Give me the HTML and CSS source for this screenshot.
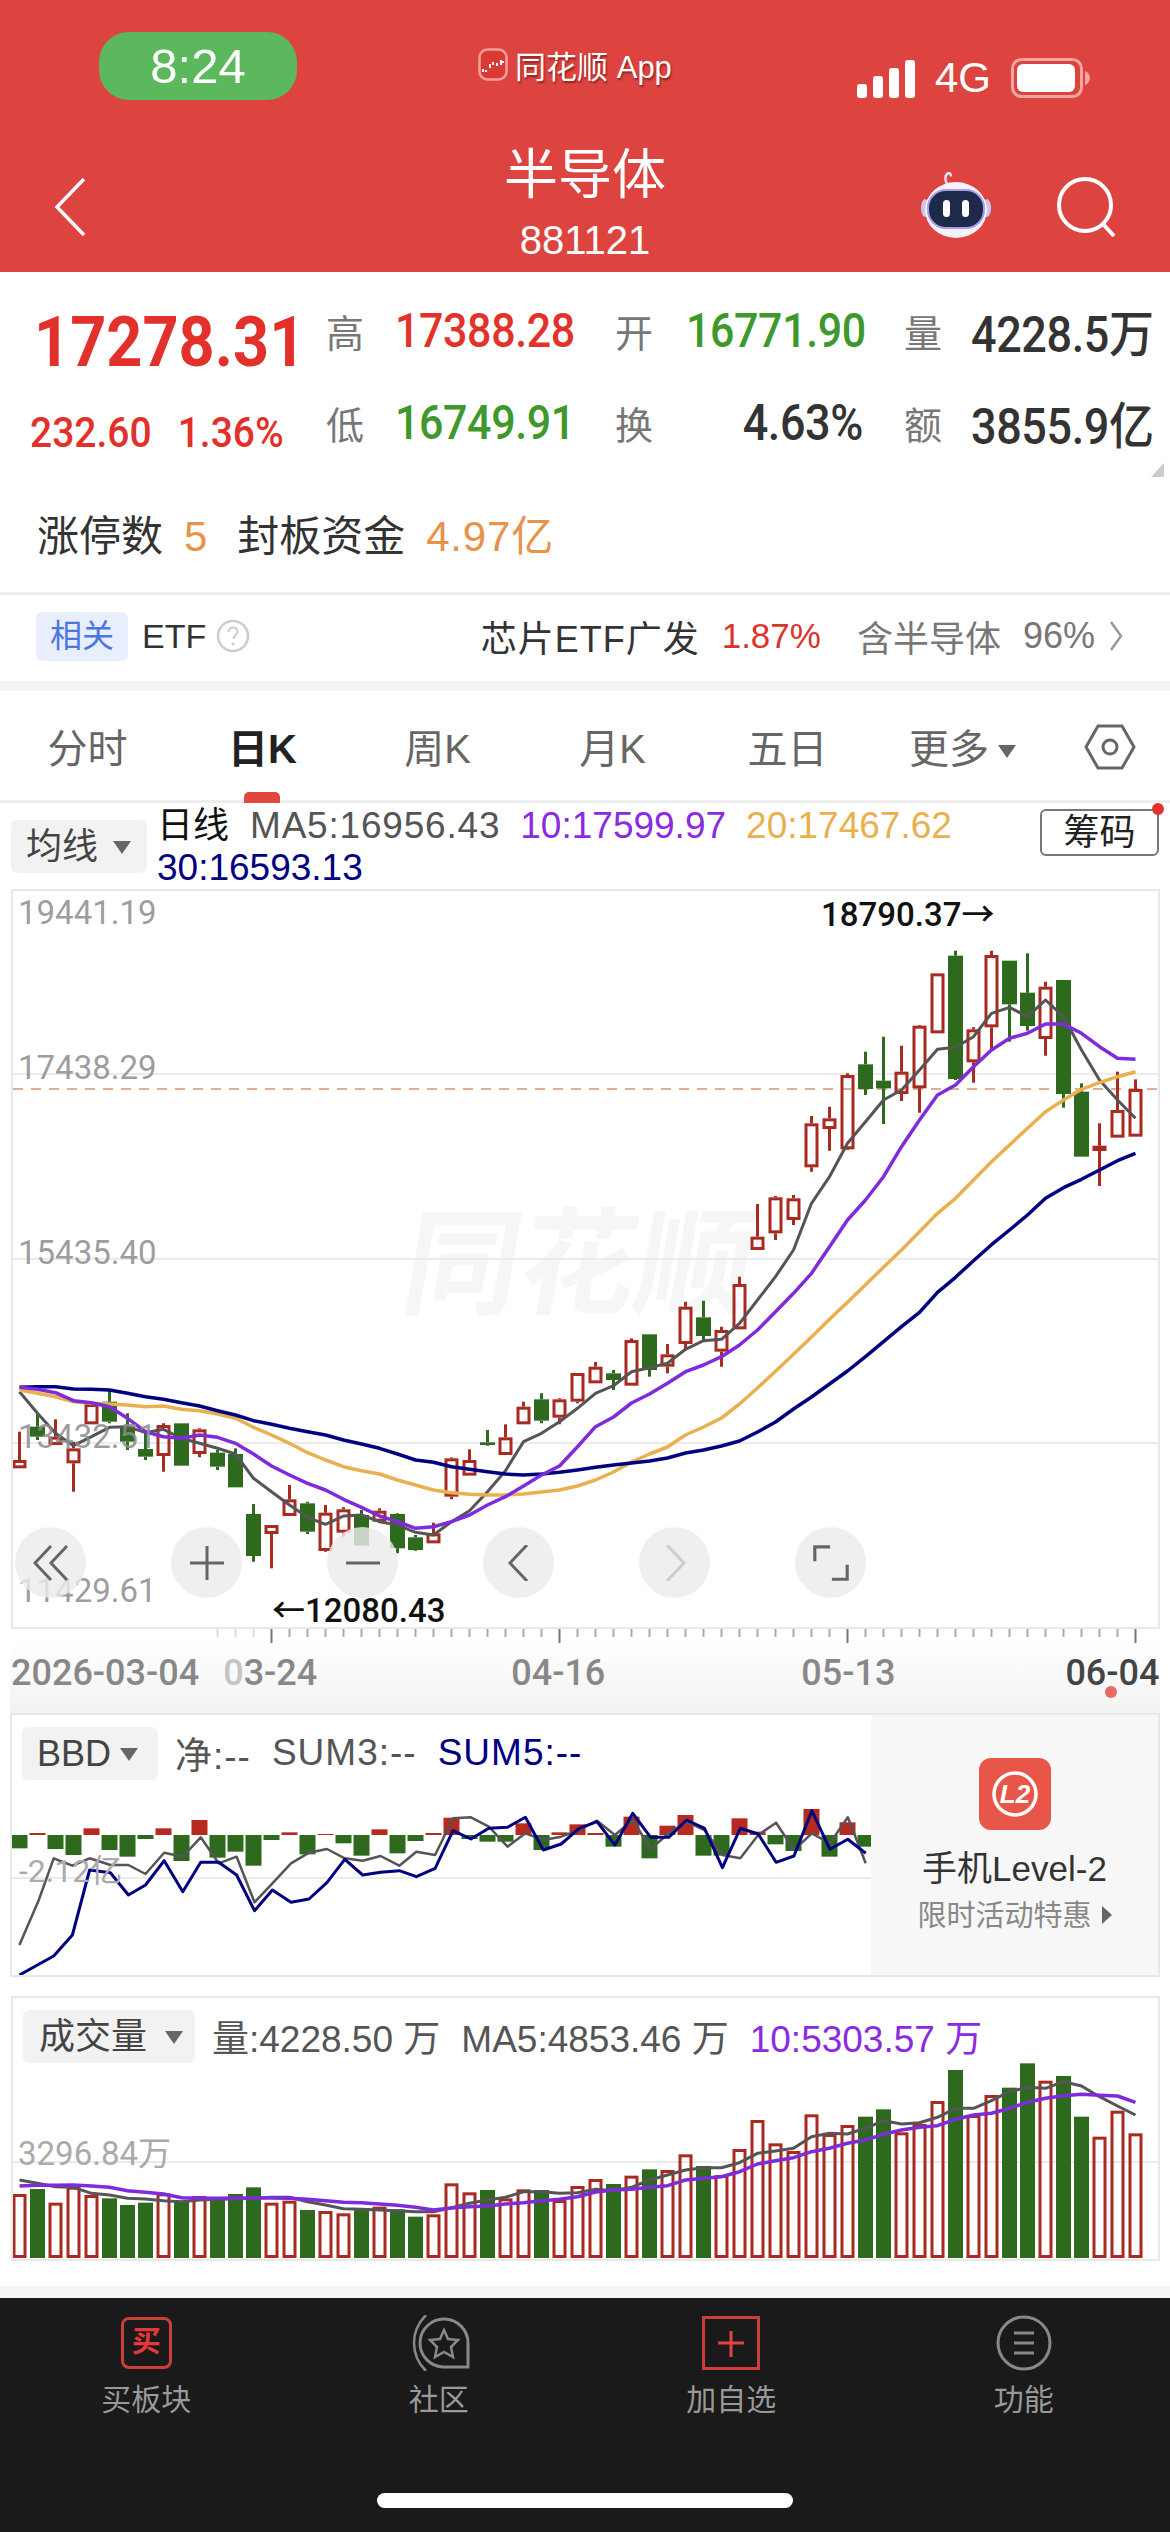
FILE: index.html
```html
<!DOCTYPE html>
<html lang="zh-CN">
<head>
    <meta charset="UTF-8">
    <meta name="viewport" content="width=device-width, initial-scale=1.0">
    <title>半导体 881121</title>
    <link rel="stylesheet" href="styles.css">
</head>
<body>

<div class="page">
    <header class="top">
        <div class="status">
            <div class="time-pill">8:24</div>
            <div class="status-app">
                <svg class="app-logo" viewBox="0 0 30 33">
                    <rect x="1.5" y="1.5" width="27" height="30" rx="8" fill="#d93a36" stroke="#f3a09c" stroke-width="2.5"/>
                    <path d="M5 21v3M8 22v2M12 16v4M15 14v3M19 15v3M23 12v5M25 13v2" stroke="#fff" stroke-width="2"/>
                </svg>
                <span>同花顺 App</span>
            </div>
            <div class="status-right">
                <svg class="signal" viewBox="0 0 58 38">
                    <rect x="0" y="24" width="10" height="14" rx="3" fill="#fff"/>
                    <rect x="16" y="16" width="10" height="22" rx="3" fill="#fff"/>
                    <rect x="32" y="8" width="10" height="30" rx="3" fill="#fff"/>
                    <rect x="48" y="0" width="10" height="38" rx="3" fill="#fff"/>
                </svg>
                <span class="net">4G</span>
                <svg class="battery" viewBox="0 0 79 40">
                    <rect x="1.5" y="1.5" width="69" height="37" rx="9" fill="none" stroke="#f3a5a2" stroke-width="3"/>
                    <rect x="6" y="6" width="58" height="28" rx="6" fill="#fff"/>
                    <path d="M74 13c3 1 5 4 5 7s-2 6-5 7z" fill="#f3a5a2"/>
                </svg>
            </div>
        </div>
        <div class="titlebar">
            <div class="title-left">
                <svg class="back" viewBox="0 0 32 60"><path d="M30 2 3 30l27 28" fill="none" stroke="#fff" stroke-width="3.5"/></svg>
            </div>
            <div class="title-center">
                <div class="title-name">半导体</div>
                <div class="title-code">881121</div>
            </div>
            <div class="title-right">
                <svg class="robot" viewBox="0 0 72 66">
                    <path d="M27 12C25 8 24 5 27 2c2-2 5 0 3 2" fill="none" stroke="#e6e2f7" stroke-width="2.5"/>
                    <ellipse cx="5" cy="36" rx="4" ry="9" fill="#c9c6f0"/>
                    <ellipse cx="67" cy="36" rx="4" ry="9" fill="#c9c6f0"/>
                    <ellipse cx="36" cy="38" rx="31" ry="28" fill="#f4f2fc"/>
                    <rect x="8" y="18" width="56" height="38" rx="18" fill="#1f2a4b" stroke="#a99be8" stroke-width="2"/>
                    <rect x="23" y="28" width="7" height="17" rx="3.5" fill="#fff"/>
                    <rect x="42" y="28" width="7" height="17" rx="3.5" fill="#fff"/>
                </svg>
                <svg class="search" viewBox="0 0 60 60">
                    <circle cx="29" cy="28" r="26" fill="none" stroke="#fff" stroke-width="4"/>
                    <path d="m47 47 11 12" stroke="#fff" stroke-width="4"/>
                </svg>
            </div>
        </div>
    </header>

    <section class="quote">
        <div class="quote-main">
            <div class="price-box">
                <div class="price">17278.31</div>
                <div class="change"><span>232.60</span><span>1.36%</span></div>
            </div>
            <div class="quote-grid">
                <span class="q-label">高</span><span class="q-val red">17388.28</span>
                <span class="q-label">开</span><span class="q-val green">16771.90</span>
                <span class="q-label">量</span><span class="q-val dark">4228.5万</span>
                <span class="q-label">低</span><span class="q-val green">16749.91</span>
                <span class="q-label">换</span><span class="q-val dark right">4.63%</span>
                <span class="q-label">额</span><span class="q-val dark">3855.9亿</span>
            </div>
        </div>
        <div class="corner"></div>
        <div class="limit">
            <span>涨停数</span><span class="orange">5</span>
            <span class="limit-next">封板资金</span><span class="orange">4.97亿</span>
        </div>
    </section>

    <section class="etf">
        <span class="etf-tag">相关</span>
        <span class="etf-name">ETF</span>
        <svg class="help" viewBox="0 0 34 34">
            <circle cx="17" cy="17" r="15" fill="none" stroke="#ccc" stroke-width="2.5"/>
            <path d="M12.500 13c0-6 9-6 9 0 0 3-4 3-4 7" fill="none" stroke="#ccc" stroke-width="2"/>
            <circle cx="17" cy="25" r="1.500" fill="#ccc"/>
        </svg>
        <div class="etf-right">
            <span class="etf-fund">芯片ETF广发</span>
            <span class="etf-pct">1.87%</span>
            <span class="etf-gray etf-hold">含半导体</span>
            <span class="etf-gray">96%</span>
            <svg class="etf-arrow" viewBox="0 0 14 32"><path d="m2 2 10 14L2 30" fill="none" stroke="#999" stroke-width="2.500"/></svg>
        </div>
    </section>

    <nav class="tabs">
        <span class="tab">分时</span>
        <span class="tab active">日K</span>
        <span class="tab">周K</span>
        <span class="tab">月K</span>
        <span class="tab">五日</span>
        <span class="tab">更多<i class="arrow-down"></i></span>
        <svg class="hex" viewBox="0 0 52 46">
            <path d="M14 2h24l12 21-12 21H14L2 23z" fill="none" stroke="#666" stroke-width="3"/>
            <circle cx="26" cy="23" r="7" fill="none" stroke="#666" stroke-width="3"/>
        </svg>
    </nav>

    <div class="chart-head">
        <div class="chip chip-ma">均线<i class="arrow-down"></i></div>
        <div class="legend">
            <span class="legend-type">日线</span>
            <span class="c-gray legend-ma5">MA5:16956.43</span>
            <span class="c-purple">10:17599.97</span>
            <span class="c-orange">20:17467.62</span>
            <span class="c-navy">30:16593.13</span>
        </div>
        <div class="chips-btn">筹码</div>
    </div>

    <div class="pane pane-kline">
        <div class="watermark">同花顺</div>
        <svg id="kline" class="chart" viewBox="13 891 1145 736"></svg>
        <span class="y-label y1">19441.19</span>
        <span class="y-label y2">17438.29</span>
        <span class="y-label y3">15435.40</span>
        <span class="y-label y4">13432.51</span>
        <span class="y-label y5">11429.61</span>
        <span class="mark mark-high">18790.37→</span>
        <span class="mark mark-low">←12080.43</span>
        <div class="chart-btns">
            <div class="round-btn">
                <svg viewBox="0 0 36 36"><path d="M18 1 2 18l16 17M34 1 18 18l16 17" fill="none" stroke="#666" stroke-width="3"/></svg>
            </div>
            <div class="round-btn">
                <svg viewBox="0 0 36 36"><path d="M1 18h34M18 1v34" fill="none" stroke="#666" stroke-width="3"/></svg>
            </div>
            <div class="round-btn">
                <svg viewBox="0 0 36 36"><path d="M1 18h34" fill="none" stroke="#666" stroke-width="3"/></svg>
            </div>
            <div class="round-btn">
                <svg viewBox="0 0 36 36"><path d="M26 0 9 18l17 18" fill="none" stroke="#666" stroke-width="3"/></svg>
            </div>
            <div class="round-btn">
                <svg viewBox="0 0 36 36"><path d="m10 0 17 18-17 18" fill="none" stroke="#ccc" stroke-width="3"/></svg>
            </div>
            <div class="round-btn">
                <svg viewBox="0 0 40 40"><path d="M2 18V2h17M38 22v16H21" fill="none" stroke="#666" stroke-width="3.500"/></svg>
            </div>
        </div>
    </div>

    <div class="axis">
        <svg id="ticks" class="ticks" viewBox="10 0 1150 16"></svg>
        <div class="dates">
            <span>2026-03-04</span>
            <span><i class="fade">0</i>3-24</span>
            <span>04-16</span>
            <span>05-13</span>
            <span class="date-last">06-04</span>
        </div>
        <i class="axis-dot"></i>
    </div>

    <div class="pane pane-bbd">
        <svg id="bbd" class="chart" viewBox="12 1715 1146 260"></svg>
        <div class="pane-head">
            <div class="chip">BBD<i class="arrow-down"></i></div>
            <span class="c-gray">净:--</span>
            <span class="c-gray">SUM3:--</span>
            <span class="c-navy">SUM5:--</span>
        </div>
        <span class="y-label y-bbd">-2.12亿</span>
        <div class="promo">
            <svg class="promo-icon" viewBox="0 0 72 72">
                <rect width="72" height="72" rx="12" fill="#e8564a"/>
                <circle cx="36" cy="36" r="21" fill="none" stroke="#fff" stroke-width="3.500"/>
                <text x="36" y="45" class="promo-l2">L2</text>
            </svg>
            <div class="promo-title">手机Level-2</div>
            <div class="promo-sub">限时活动特惠<i class="arrow-right"></i></div>
        </div>
    </div>

    <div class="pane pane-vol">
        <svg id="vol" class="chart" viewBox="13 1998 1145 261"></svg>
        <div class="pane-head">
            <div class="chip chip-vol">成交量<i class="arrow-down"></i></div>
            <span class="c-gray">量:4228.50 万</span>
            <span class="c-gray">MA5:4853.46 万</span>
            <span class="c-purple">10:5303.57 万</span>
        </div>
        <span class="y-label y-vol">3296.84万</span>
    </div>

    <div class="spacer"></div>
    <div class="band"></div>

    <footer class="bottom">
        <div class="bottom-items">
            <div class="bottom-item">
                <div class="icon-box icon-buy">买</div>
                <span>买板块</span>
            </div>
            <div class="bottom-item">
                <svg class="icon-box" viewBox="0 0 62 56">
                    <path d="M18 0C2 16 2 40 18 56" fill="none" stroke="#888" stroke-width="2.500"/>
                    <path d="M60 52H35A24 24 0 1 1 60 28z" fill="none" stroke="#888" stroke-width="3"/>
                    <path d="m36 15 4 9 10 1-7 7 2 10-9-5-9 5 2-10-7-7 10-1z" fill="none" stroke="#888" stroke-width="2.500"/>
                </svg>
                <span>社区</span>
            </div>
            <div class="bottom-item">
                <svg class="icon-box" viewBox="0 0 58 56">
                    <rect x="1.500" y="2.500" width="55" height="51" fill="none" stroke="#c9403a" stroke-width="3"/>
                    <path d="M29 16v26M16 28h26" fill="none" stroke="#e04540" stroke-width="3"/>
                </svg>
                <span>加自选</span>
            </div>
            <div class="bottom-item">
                <svg class="icon-box" viewBox="0 0 56 56">
                    <circle cx="28" cy="28" r="26" fill="none" stroke="#888" stroke-width="3"/>
                    <path d="M18 18h20M18 28h20M18 38h20" fill="none" stroke="#888" stroke-width="3"/>
                </svg>
                <span>功能</span>
            </div>
        </div>
        <div class="home-bar"></div>
    </footer>
</div>

<script src="script.js"></script>
</body>
</html>
```

FILE: styles.css
```css
* {
    box-sizing: border-box;
}
body {
    margin: 0;
    background-color: #fff;
    font-family: "Liberation Sans", "Noto Sans CJK SC", sans-serif;
    color: #333;
}
i {
    font-style: normal;
}
.page {
    width: 1170px;
    height: 2532px;
    overflow: hidden;
    display: flex;
    flex-direction: column;
}

/* red header */
.top {
    flex: none;
    height: 272px;
    background-color: #dd4440;
    color: #fff;
}
.status {
    display: flex;
    justify-content: space-between;
    padding: 32px 80px 0 99px;
    height: 100px;
}
.time-pill {
    width: 198px;
    height: 68px;
    border-radius: 30px;
    background-color: #5cb85c;
    font-size: 49px;
    line-height: 68px;
    text-align: center;
}
.status-app {
    display: flex;
    align-items: center;
    gap: 7px;
    height: 64px;
    margin-right: 4px;
    font-size: 31px;
    text-shadow: 1px 2px 2px rgba(80, 0, 0, 0.55);
}
.app-logo {
    width: 30px;
    height: 33px;
}
.status-right {
    display: flex;
    align-items: flex-end;
    gap: 20px;
    height: 66px;
}
.signal {
    width: 58px;
    height: 38px;
}
.net {
    font-size: 42px;
    line-height: 40px;
}
.battery {
    width: 79px;
    height: 40px;
}
.titlebar {
    display: grid;
    grid-template-columns: 1fr auto 1fr;
    height: 172px;
}
.title-left {
    padding: 77px 0 0 54px;
}
.back {
    display: block;
    width: 32px;
    height: 60px;
}
.title-center {
    padding-top: 45px;
    text-align: center;
}
.title-name {
    font-size: 54px;
    line-height: 60px;
}
.title-code {
    margin-top: 13px;
    font-size: 40px;
    line-height: 44px;
}
.title-right {
    display: flex;
    justify-content: flex-end;
    align-items: flex-start;
    gap: 64px;
    padding: 72px 54px 0 0;
}
.robot {
    width: 72px;
    height: 66px;
}
.search {
    width: 60px;
    height: 60px;
    margin-top: 5px;
}

/* quote block */
.quote {
    position: relative;
    flex: none;
    height: 323px;
    border-bottom: 3px solid #eee;
}
.quote-main {
    display: flex;
    padding-top: 12px;
}
.price-box {
    width: 326px;
    font-family: Roboto, "Noto Sans CJK SC", sans-serif;
    color: #e2302a;
}
.price {
    margin: 23px 0 0 34px;
    font-size: 63px;
    font-weight: 700;
    line-height: 70px;
    transform: scaleY(1.12);
}
.change {
    display: flex;
    gap: 26px;
    margin: 34px 0 0 30px;
    font-size: 39px;
    font-weight: 500;
    line-height: 44px;
    transform: scaleY(1.1);
}
.quote-grid {
    display: grid;
    grid-template-columns: 69px 220px 71px 218px 67px auto;
    grid-auto-rows: 92px;
    align-items: center;
    font-family: Roboto, "Noto Sans CJK SC", sans-serif;
}
.q-label {
    font-size: 38px;
    color: #777;
}
.q-val {
    font-size: 43px;
    font-weight: 500;
    letter-spacing: -0.4px;
    color: #333;
    transform: scaleY(1.1);
}
.q-val.dark {
    font-size: 45px;
}
.q-val.right {
    padding-right: 41px;
    text-align: right;
}
.q-val.red {
    color: #e2332b;
}
.q-val.green {
    color: #3f982c;
}
.corner {
    position: absolute;
    right: 6px;
    top: 191px;
    width: 0;
    height: 0;
    border-left: 13px solid transparent;
    border-bottom: 14px solid #ccc;
}
.limit {
    display: flex;
    gap: 21px;
    margin-top: 38px;
    padding-left: 37px;
    font-size: 42px;
    line-height: 62px;
}
.limit-next {
    margin-left: 8px;
}
.orange {
    color: #e8924a;
    letter-spacing: 0.8px;
}

/* related etf */
.etf {
    flex: none;
    display: flex;
    align-items: center;
    height: 86px;
    padding: 0 47px 4px 36px;
    font-size: 36px;
}
.etf-tag {
    width: 92px;
    height: 49px;
    border-radius: 6px;
    background-color: #e8eefb;
    color: #4a76e0;
    font-size: 32px;
    line-height: 49px;
    text-align: center;
}
.etf-name {
    margin-left: 14px;
    font-size: 34px;
}
.help {
    width: 34px;
    height: 34px;
    margin-left: 10px;
}
.etf-right {
    display: flex;
    align-items: center;
    margin-left: auto;
    gap: 22px;
}
.etf-fund {
    letter-spacing: 1px;
}
.etf-pct {
    font-size: 35px;
    color: #d9342c;
}
.etf-gray {
    color: #777;
}
.etf-hold {
    margin-left: 14px;
}
.etf-arrow {
    width: 14px;
    height: 32px;
    margin-left: -8px;
}

/* period tabs */
.tabs {
    display: flex;
    flex: none;
    height: 112px;
    margin-top: 10px;
    border-bottom: 3px solid #eee;
    box-shadow: 0 -10px 0 #f4f4f4;
    padding-right: 34px;
}
.tab {
    position: relative;
    width: 175px;
    padding-top: 36px;
    text-align: center;
    font-size: 40px;
    line-height: 44px;
    color: #666;
}
.tab.active {
    color: #222;
    font-weight: 700;
}
.tab.active::after {
    content: "";
    position: absolute;
    left: 69px;
    bottom: -3px;
    width: 36px;
    height: 11px;
    border-radius: 5px 5px 0 0;
    background-color: #e2473c;
}
.arrow-down {
    display: inline-block;
    width: 0;
    height: 0;
    margin-left: 9px;
    vertical-align: 5px;
    border-left: 9px solid transparent;
    border-right: 9px solid transparent;
    border-top: 13px solid #666;
}
.hex {
    width: 52px;
    height: 46px;
    margin: 33px 0 0 34px;
}

/* chart header */
.chart-head {
    position: relative;
    flex: none;
    display: flex;
    height: 86px;
    padding-left: 11px;
    font-size: 37px;
}
.chip {
    flex: none;
    height: 53px;
    padding: 0 14px 0 15px;
    border-radius: 6px;
    background-color: #f2f2f2;
    font-size: 36px;
    line-height: 53px;
    color: #444;
}
.chip-ma {
    width: 136px;
    margin-top: 17px;
}
.chip-ma .arrow-down {
    margin-left: 15px;
}
.legend {
    display: flex;
    flex-wrap: wrap;
    gap: 0 20px;
    width: 830px;
    margin: 2px 0 0 10px;
    line-height: 42px;
    white-space: nowrap;
}
.legend-type {
    margin-right: 1px;
    font-size: 36px;
    color: #111;
}
.legend-ma5 {
    letter-spacing: 0.8px;
}
.c-gray {
    color: #555;
}
.c-purple {
    color: #8a2be2;
}
.c-orange {
    color: #e8b04e;
}
.c-navy {
    color: #000080;
}
.chips-btn {
    position: absolute;
    left: 1040px;
    top: 6px;
    width: 119px;
    height: 47px;
    border: 2px solid #777;
    border-radius: 6px;
    font-size: 36px;
    line-height: 43px;
    text-align: center;
    color: #222;
}
.chips-btn::after {
    content: "";
    position: absolute;
    right: -7px;
    top: -8px;
    width: 12px;
    height: 12px;
    border-radius: 50%;
    background-color: #e2332b;
}

/* chart panes */
.pane {
    position: relative;
    flex: none;
    width: 1149px;
    margin-left: 11px;
    border: 2px solid #e8e8e8;
    background-color: #fff;
}
.pane-kline {
    height: 740px;
}
.pane-bbd {
    height: 264px;
    width: 1150px;
    margin-left: 10px;
}
.pane-vol {
    height: 265px;
    margin-top: 19px;
}
.chart {
    position: relative;
    display: block;
    width: 100%;
    height: 100%;
}
.watermark {
    position: absolute;
    left: 392px;
    top: 314px;
    font-size: 116px;
    font-weight: 700;
    line-height: 120px;
    color: #f6f6f6;
    transform: skewX(-10deg);
}
.y-label {
    position: absolute;
    left: 5px;
    font-family: Roboto, "Noto Sans CJK SC", sans-serif;
    font-size: 33px;
    line-height: 34px;
    color: rgba(140, 140, 140, 0.85);
}
.y1 {
    top: 5px;
}
.y2 {
    top: 160px;
}
.y3 {
    top: 345px;
}
.y4 {
    top: 529px;
}
.y5 {
    top: 683px;
}
.y-bbd {
    top: 139px;
    left: 7px;
    font-size: 32px;
    color: #aaa;
}
.y-vol {
    top: 139px;
    left: 5px;
    color: #aaa;
}
.mark {
    position: absolute;
    font-family: Roboto, "Noto Sans CJK SC", sans-serif;
    font-size: 33px;
    font-weight: 500;
    line-height: 34px;
    color: #111;
}
.mark-high {
    left: 808px;
    top: 7px;
}
.mark-low {
    left: 259px;
    top: 703px;
}
.chart-btns {
    position: absolute;
    left: 2px;
    top: 636px;
    display: flex;
    gap: 85px;
}
.round-btn {
    display: flex;
    align-items: center;
    justify-content: center;
    width: 71px;
    height: 71px;
    border-radius: 50%;
    background-color: rgba(235, 235, 235, 0.82);
}
.round-btn svg {
    width: 36px;
    height: 36px;
}

/* date axis */
.axis {
    position: relative;
    flex: none;
    height: 84px;
    margin: 0 10px;
    background: linear-gradient(#fff 12px, #f3f3f3 80px);
}
.ticks {
    display: block;
    width: 1150px;
    height: 16px;
}
.dates {
    display: flex;
    padding: 11px 0 0 1px;
    font-family: Roboto, "Noto Sans CJK SC", sans-serif;
    font-size: 36px;
    font-weight: 500;
    line-height: 34px;
    color: #888;
}
.dates span:nth-child(2) {
    margin-left: 24px;
}
.dates span:nth-child(3) {
    margin-left: 194px;
}
.dates span:nth-child(4) {
    margin-left: 196px;
}
.dates span:nth-child(5) {
    margin-left: 170px;
}
.fade {
    color: #c4c4c4;
}
.date-last {
    color: #444;
}
.axis-dot {
    position: absolute;
    left: 1095px;
    top: 57px;
    width: 12px;
    height: 12px;
    border-radius: 50%;
    background-color: #e86a64;
}

/* pane titles */
.pane-head {
    position: absolute;
    left: 10px;
    top: 11px;
    display: flex;
    align-items: center;
    gap: 21px;
    font-size: 37px;
    white-space: nowrap;
}
.pane-head span {
    letter-spacing: 1px;
}
.pane-head .chip {
    width: 136px;
    margin-right: -4px;
}
.pane-vol .pane-head span {
    letter-spacing: 0;
}
.pane-vol .chip {
    width: 172px;
    margin-right: -4px;
    padding-left: 16px;
}
.pane-vol .arrow-down {
    margin-left: 18px;
}

/* level-2 promo */
.promo {
    position: absolute;
    right: 0;
    top: 0;
    bottom: 0;
    width: 287px;
    padding-top: 43px;
    text-align: center;
    background-color: #f7f7f7;
}
.promo-icon {
    display: block;
    width: 72px;
    height: 72px;
    margin: 0 auto;
}
.promo-l2 {
    font-size: 26px;
    font-weight: 700;
    font-style: italic;
    text-anchor: middle;
    fill: #fff;
}
.promo-title {
    margin-top: 19px;
    font-size: 35px;
    line-height: 40px;
    color: #333;
}
.promo-sub {
    margin-top: 8px;
    font-size: 29px;
    line-height: 38px;
    color: #888;
}
.arrow-right {
    display: inline-block;
    width: 0;
    height: 0;
    margin-left: 10px;
    vertical-align: 2px;
    border-top: 9px solid transparent;
    border-bottom: 9px solid transparent;
    border-left: 10px solid #666;
}

/* bottom nav */
.spacer {
    flex: none;
    height: 25px;
}
.band {
    flex: none;
    height: 12px;
    background-color: #f4f4f4;
}
.bottom {
    flex: 1;
    display: flex;
    flex-direction: column;
    background-color: #1a1a1a;
}
.bottom-items {
    display: grid;
    grid-template-columns: repeat(4, 1fr);
    padding-top: 17px;
}
.bottom-item {
    display: flex;
    flex-direction: column;
    align-items: center;
    font-size: 30px;
    line-height: 34px;
    color: #999;
}
.bottom-item span {
    margin-top: 12px;
}
.icon-box {
    height: 56px;
}
.icon-buy {
    width: 51px;
    height: 52px;
    margin: 2px 0;
    border: 3px solid #c9403a;
    border-radius: 8px;
    font-size: 29px;
    font-weight: 700;
    line-height: 45px;
    text-align: center;
    color: #e5383b;
}
.home-bar {
    width: 416px;
    height: 15px;
    margin: auto auto 24px;
    border-radius: 8px;
    background-color: #fff;
}
```

FILE: script.js
```js
const RED = '#a82a20';
const GREEN = '#2d6a1e';
const GRAY = '#555';
const PURPLE = '#7f2bdc';
const ORANGE = '#e8b04e';
const NAVY = '#000080';

const barX = i => 19.5 + 18 * i;

// candles: high, body top, body bottom, low, colour. values are thirds of a pixel from a base row
const candlesA = [
    [155,240,265,265,'r'],[100,140,170,180,'g'],[118,170,195,195,'r'],[185,205,250,335,'r'],
    [65,72,133,133,'r'],[33,65,125,130,'g'],[100,140,185,210,'g'],[150,207,230,240,'g'],
    [130,135,228,275,'r'],[130,130,257,257,'g'],[145,148,222,232,'r'],[210,218,260,270,'g'],
    [205,222,322,322,'g'],[372,402,528,545,'g'],[435,435,462,565,'r'],[315,358,408,408,'r'],
    [365,370,455,462,'g'],[375,398,513,515,'r'],[382,388,458,470,'r'],[390,405,497,497,'g'],
    [385,392,425,425,'r'],[400,402,505,520,'g'],[465,472,510,512,'g'],[428,460,490,490,'r'],
    [232,235,350,358,'r'],[208,240,287,287,'r'],[150,187,195,197,'g'],[133,172,225,225,'r'],
    [65,80,133,133,'r'],[40,58,122,130,'g'],[55,58,113,133,'r'],[-20,-21,65,70,'r'],[-54,-40,10,10,'r']
];
const candlesB = [
    [1440,1450,1470,1500,'g'],[1345,1350,1487,1487,'r'],[1333,1333,1440,1460,'g'],[1362,1393,1430,1450,'r'],
    [1235,1250,1362,1380,'r'],[1232,1282,1338,1350,'g'],[1310,1320,1385,1430,'r'],[1160,1182,1318,1318,'r'],
    [942,1040,1080,1080,'r'],[918,922,1030,1050,'r'],[915,925,990,1005,'r'],[678,700,832,845,'r'],
    [650,685,717,782,'r'],[550,555,778,780,'r'],[485,523,597,615,'g'],[440,572,595,702,'g'],
    [467,545,612,633,'r'],[405,407,595,668,'r'],[250,250,430,430,'r'],[182,197,567,570,'g'],
    [412,418,517,578,'r'],[182,195,412,480,'r'],[212,212,343,455,'g'],[190,308,408,422,'g'],
    [275,290,447,497,'r'],[270,270,612,653,'g'],[580,605,800,800,'g'],[700,767,783,888,'r'],
    [545,660,743,743,'r'],[568,597,740,740,'r']
];

// moving averages in the same units
const ma5A = [35,100,160,197,170,142,140,158,148,175,190,205,222,295,335,375,412,433,408,405,425,435,457,465,425,392,335,272,185,160,125,85,40];
const ma5B = [1487,1445,1433,1420,1378,1352,1348,1300,1230,1160,1080,940,860,760,695,630,600,540,478,472,440,370,352,380,330,380,480,570,630,685];
const ma10A = [22,28,38,62,68,80,115,155,170,175,165,172,190,222,258,285,310,330,358,382,408,425,445,440,425,405,375,350,318,285,258,200,140];
const ma10B = [1581,1539,1512,1480,1445,1425,1400,1365,1320,1265,1210,1150,1070,990,930,860,770,690,615,585,530,480,445,430,402,402,430,470,505,508];
const ma20A = [30,40,50,65,70,72,75,80,78,88,92,102,115,142,165,190,218,240,260,272,282,300,315,330,338,343,345,345,342,336,330,318,300];
const ma20B = [1746,1716,1692,1671,1635,1611,1584,1542,1494,1444,1393,1341,1288,1237,1184,1132,1080,1025,970,925,870,815,765,715,665,630,598,578,560,545];
const ma30A = [22,20,20,27,28,30,40,50,58,68,78,92,105,122,133,145,155,165,180,192,205,222,240,247,260,268,275,282,285,282,277,270,262];
const ma30B = [1725,1719,1713,1704,1689,1680,1668,1653,1626,1596,1557,1521,1482,1443,1400,1355,1310,1267,1207,1162,1112,1064,1020,975,925,893,868,840,812,790];

function joinParts(a, b) {
    return a.map(v => 1380 + v / 3).concat(b.map(v => 890 + v / 3));
}

function hline(y) {
    return `<path d="M0 ${y}H1170" stroke="#ebebeb" stroke-width="2"/>`;
}

function polyline(points, color, width) {
    return `<polyline points="${points.join(' ')}" fill="none" stroke="${color}" stroke-width="${width}" stroke-linejoin="round"/>`;
}

function maLine(ys, color, width) {
    return polyline(ys.map((y, i) => `${barX(i)},${y.toFixed(1)}`), color, width);
}

function drawCandle(c, i, base) {
    const x = barX(i);
    const [high, top, bottom, low, kind] = c.map(v => typeof v === 'number' ? base + v / 3 : v);
    const color = kind === 'r' ? RED : GREEN;
    let s = `<path d="M${x} ${high}V${top}M${x} ${bottom}V${low}" stroke="${color}" stroke-width="3"/>`;
    if (kind === 'r') {
        s += `<rect x="${x - 5.5}" y="${top + 1.5}" width="11" height="${Math.max(bottom - top - 3, 1)}" fill="none" stroke="${color}" stroke-width="3"/>`;
    } else {
        s += `<rect x="${x - 7.5}" y="${top}" width="15" height="${bottom - top}" fill="${color}"/>`;
    }
    return s;
}

function drawKline() {
    let s = hline(1074) + hline(1259) + hline(1443);
    s += '<path d="M13 1089H1158" stroke="#dcae94" stroke-width="2" stroke-dasharray="10 8"/>';
    candlesA.forEach((c, i) => { s += drawCandle(c, i, 1380); });
    candlesB.forEach((c, i) => { s += drawCandle(c, i + candlesA.length, 890); });
    s += maLine(joinParts(ma5A, ma5B), GRAY, 3);
    s += maLine(joinParts(ma20A, ma20B), ORANGE, 3.5);
    s += maLine(joinParts(ma30A, ma30B), NAVY, 3.5);
    s += maLine(joinParts(ma10A, ma10B), PURPLE, 3.5);
    document.getElementById('kline').innerHTML = s;
}

function drawTicks() {
    let s = '';
    for (let i = 11; i <= 62; i++) {
        const big = (i - 14) % 16 === 0;
        const color = i < 14 ? '#ddd' : '#aaa';
        s += `<path d="M${barX(i)} 0V${big ? 14 : 8}" stroke="${big ? '#777' : color}" stroke-width="2"/>`;
    }
    document.getElementById('ticks').innerHTML = s;
}

// bbd: bar height from the zero row, up is red
const bbdBars = [-40,6,-42,-60,20,-45,-65,-12,20,-78,45,-68,-50,-92,-15,8,-58,3,-25,-62,17,-55,-18,6,52,-12,-20,-20,35,-45,8,32,6,-35,55,-70,28,60,-62,-62,50,10,-28,-48,78,-65,38,-35];
const bbdNavy = [[26,825],[72,768],[97,705],[120,510],[148,518],[172,585],[195,555],[220,482],[245,575],[269,487],[293,487],[317,525],[341,632],[365,570],[390,607],[414,597],[438,548],[462,478],[486,525],[510,517],[535,512],[558,530],[583,505],[607,392],[631,417],[655,385],[680,382],[704,352],[728,450],[752,432],[776,385],[800,365],[824,435],[848,340],[872,412],[896,412],[920,360],[944,385],[968,503],[992,385],[1016,402],[1040,487],[1064,468],[1088,332],[1112,448],[1136,418],[1160,460]];
const bbdGray = [[26,735],[52,600],[72,475],[97,497],[120,475],[148,495],[172,495],[195,522],[220,458],[245,470],[269,412],[293,490],[317,470],[341,607],[365,550],[390,490],[414,458],[438,447],[462,475],[486,482],[510,468],[535,497],[558,455],[583,465],[607,355],[631,352],[655,380],[680,440],[704,400],[728,420],[752,410],[776,390],[800,362],[824,405],[848,360],[872,447],[896,400],[920,365],[944,390],[968,465],[992,475],[1016,405],[1040,368],[1064,450],[1088,400],[1112,430],[1136,352],[1160,490]];

function bbdPoints(list) {
    return list.map(p => `${(p[0] / 1.34).toFixed(1)},${(1700 + p[1] / 3).toFixed(1)}`);
}

function drawBbd() {
    const zero = 1835;
    let s = hline(1878);
    bbdBars.forEach((v, i) => {
        const h = Math.abs(v) / 3;
        const y = v > 0 ? zero - h : zero;
        s += `<rect x="${barX(i) - 8}" y="${y}" width="16" height="${h}" fill="${v > 0 ? '#b62a20' : GREEN}"/>`;
    });
    s += polyline(bbdPoints(bbdGray), GRAY, 2.5);
    s += polyline(bbdPoints(bbdNavy), NAVY, 3);
    document.getElementById('bbd').innerHTML = s;
}

// volume: bar top and colour, then the two averages
const volA = [[642,'r'],[627,'g'],[668,'r'],[620,'r'],[645,'r'],[655,'g'],[675,'g'],[668,'g'],[640,'r'],[662,'g'],[648,'r'],[660,'g'],[642,'g'],[622,'g'],[668,'r'],[662,'r'],[690,'g'],[693,'r'],[700,'r'],[685,'g'],[680,'r'],[688,'g'],[710,'g'],[703,'r'],[610,'r'],[637,'r'],[630,'g'],[655,'r'],[628,'r'],[630,'g'],[660,'r'],[618,'r'],[597,'r']];
const volB = [[612,'g'],[587,'r'],[568,'g'],[570,'r'],[523,'r'],[558,'g'],[585,'r'],[507,'r'],[420,'r'],[490,'r'],[513,'r'],[403,'r'],[462,'r'],[435,'r'],[410,'g'],[388,'g'],[457,'r'],[432,'r'],[363,'r'],[270,'g'],[405,'r'],[345,'r'],[323,'g'],[250,'g'],[302,'r'],[288,'g'],[410,'g'],[470,'r'],[392,'r'],[460,'r']];
const volMa5 = [600,610,620,622,640,645,655,657,662,665,660,658,657,655,652,652,665,675,686,688,690,692,695,695,683,670,660,652,635,635,640,638,628,632,622,600,585,570,563,563,548,520,513,505,470,460,462,445,422,432,428,412,385,385,362,335,322,325,305,318,350,378,405];
const volMa10 = [618,616,616,615,618,622,632,637,642,653,655,655,654,654,654,655,658,662,667,668,672,676,682,690,684,680,678,672,668,662,658,650,636,630,628,622,617,600,595,590,575,552,542,533,515,505,490,480,463,450,442,437,418,405,400,385,367,355,347,343,346,348,367];

function drawVol() {
    const baseline = 2258;
    let s = hline(2162);
    volA.concat(volB).forEach((b, i) => {
        const x = barX(i);
        const top = 1980 + b[0] / 3;
        if (b[1] === 'r') {
            s += `<rect x="${x - 5.5}" y="${top + 1.5}" width="11" height="${baseline - top - 3}" fill="none" stroke="${RED}" stroke-width="3"/>`;
        } else {
            s += `<rect x="${x - 7.5}" y="${top}" width="15" height="${baseline - top}" fill="${GREEN}"/>`;
        }
    });
    s += maLine(volMa5.map(v => 1980 + v / 3), GRAY, 3);
    s += maLine(volMa10.map(v => 1980 + v / 3), PURPLE, 3.5);
    document.getElementById('vol').innerHTML = s;
}

drawKline();
drawTicks();
drawBbd();
drawVol();
```
